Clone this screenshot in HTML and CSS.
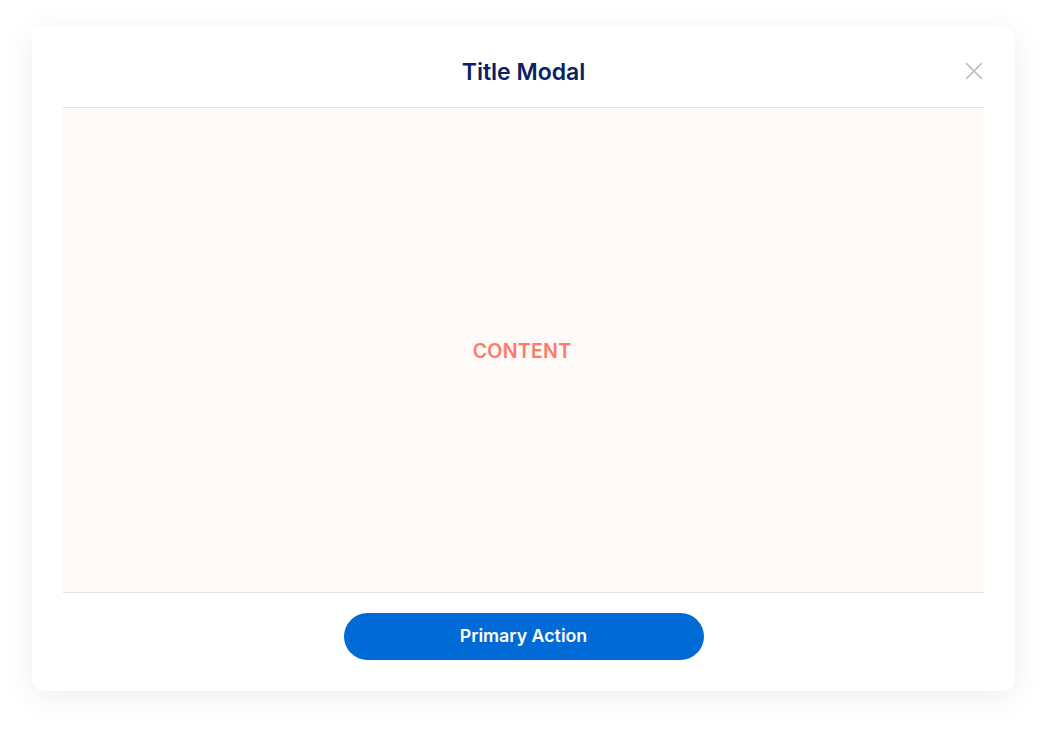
FILE: index.html
```html
<!DOCTYPE html>
<html lang="en">
<head>
<meta charset="utf-8">
<title>Title Modal</title>
<link rel="stylesheet" href="styles.css">
</head>
<body>
  <div class="modal">
    <header class="modal-header">
      <h1 class="modal-title">Title Modal</h1>
      <button class="modal-close" aria-label="Close">
        <svg width="18" height="18" viewBox="0 0 18 18" fill="none" stroke="currentColor" stroke-width="1.6" stroke-linecap="round">
          <path d="M1.5 1.5 L16.5 16.5 M16.5 1.5 L1.5 16.5"/>
        </svg>
      </button>
    </header>
    <main class="modal-body">
      <span class="modal-placeholder">CONTENT</span>
    </main>
    <footer class="modal-footer">
      <button class="btn-primary">Primary Action</button>
    </footer>
  </div>
</body>
</html>
```
FILE: styles.css
```css
* {
  box-sizing: border-box;
}

html, body {
  margin: 0;
  padding: 0;
  background: #ffffff;
  font-family: Inter, "Noto Sans", sans-serif;
}

body {
  min-height: 731px;
  padding: 26px 0 40px 32px;
}

.modal {
  position: relative;
  width: 983px;
  height: 665px;
  background: #ffffff;
  border-radius: 12px;
  box-shadow: 0 6px 32px rgba(0, 0, 0, 0.07);
  padding: 0 31px;
  display: flex;
  flex-direction: column;
}

.modal-header {
  padding: 32px 0 21px;
  border-bottom: 1.5px solid #e2e2e5;
  text-align: center;
}

.modal-title {
  margin: 0;
  font-size: 23px;
  line-height: 28px;
  font-weight: 600;
  color: #0a2263;
}

.modal-close {
  position: absolute;
  top: 36px;
  right: 32px;
  padding: 0;
  border: 0;
  background: none;
  color: #b9b9bd;
  width: 18px;
  height: 18px;
  cursor: pointer;
}

.modal-close svg {
  display: block;
}

.modal-body {
  flex: 1;
  background: #fff9f7;
  border-bottom: 1.5px solid #e2e2e5;
  display: flex;
  align-items: center;
  justify-content: center;
}

.modal-placeholder {
  font-size: 19.5px;
  font-weight: 600;
  color: #ff7a68;
  letter-spacing: 0.3px;
  padding-top: 2px;
  margin-left: -3px;
}

.modal-footer {
  padding: 20px 0 31px;
  display: flex;
  justify-content: center;
}

.btn-primary {
  width: 360px;
  height: 47px;
  border: 0;
  border-radius: 24px;
  background: #006bd6;
  color: #ffffff;
  font-family: Inter, "Noto Sans", sans-serif;
  font-size: 17.8px;
  font-weight: 600;
  padding-bottom: 3px;
  cursor: pointer;
}
```
